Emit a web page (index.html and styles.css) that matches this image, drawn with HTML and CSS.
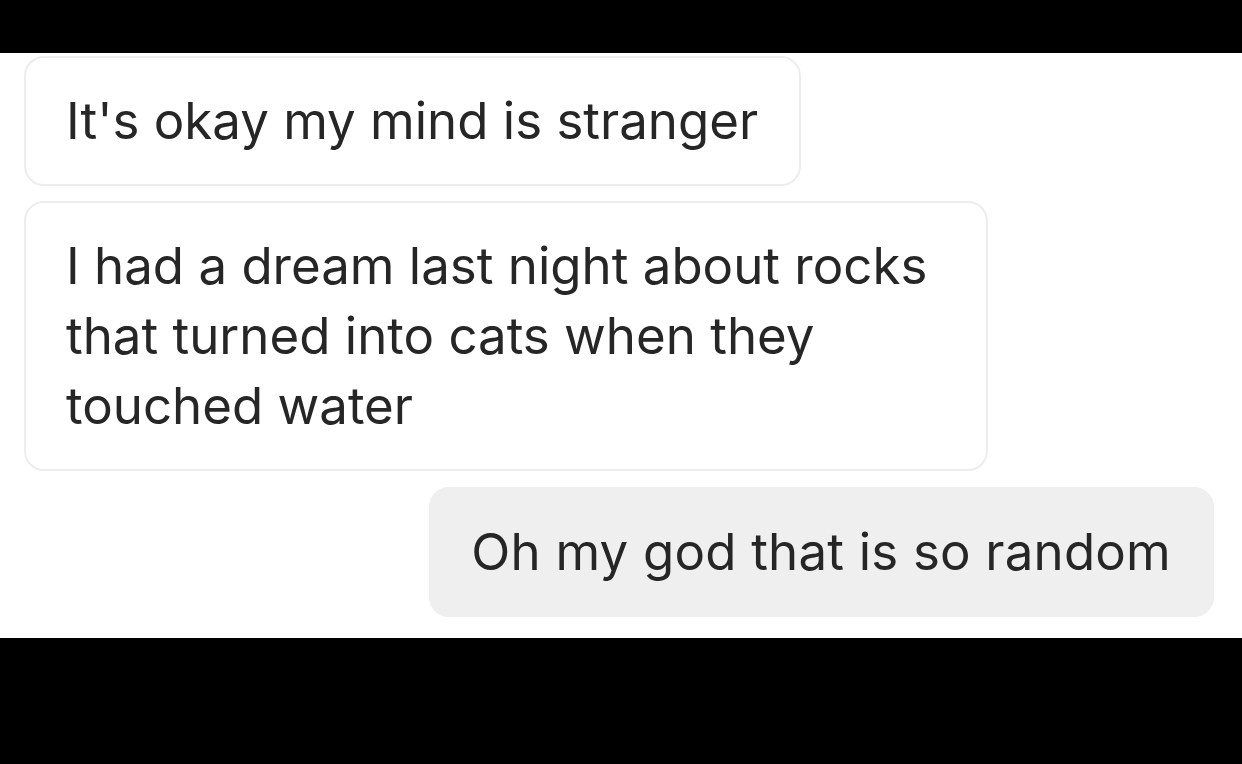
FILE: index.html
```html
<!DOCTYPE html>
<html lang="en">
<head>
<meta charset="utf-8">
<title>Chat</title>
<link rel="stylesheet" href="styles.css">
</head>
<body>
<div class="topbar"></div>
<main class="chat">
  <div class="row row-left">
    <div class="bubble bubble-in">It's okay my mind is stranger</div>
  </div>
  <div class="row row-left">
    <div class="bubble bubble-in bubble-wide">I had a dream last night about rocks that turned into cats when they touched water</div>
  </div>
  <div class="row row-right">
    <div class="bubble bubble-out">Oh my god that is so random</div>
  </div>
</main>
<div class="bottombar"></div>
</body>
</html>
```

FILE: styles.css
```css
* { box-sizing: border-box; }
html, body {
  margin: 0;
  padding: 0;
  background: #000;
  width: 1242px;
  height: 764px;
  overflow: hidden;
}
.topbar {
  height: 53px;
  background: #000;
}
.chat {
  background: #fff;
  height: 585px;
  padding: 3px 28px 0 24px;
  display: flex;
  flex-direction: column;
  gap: 15px;
  font-family: "Inter", "Liberation Sans", sans-serif;
  font-size: 51px;
  line-height: 70px;
  color: #262626;
}
.row { display: flex; }
.row-left { justify-content: flex-start; }
.row-right { justify-content: flex-end; margin-top: 1px; }
.bubble {
  padding: 28px 41px 28px 40px;
  border-radius: 20px;
  border: 2px solid #ededed;
}
.bubble-in { background: #fff; }
.bubble-wide { max-width: 964px; }
.bubble-out {
  background: #efefef;
  border-color: #efefef;
  letter-spacing: 0.2px;
}
.bottombar {
  height: 126px;
  background: #000;
}
```
